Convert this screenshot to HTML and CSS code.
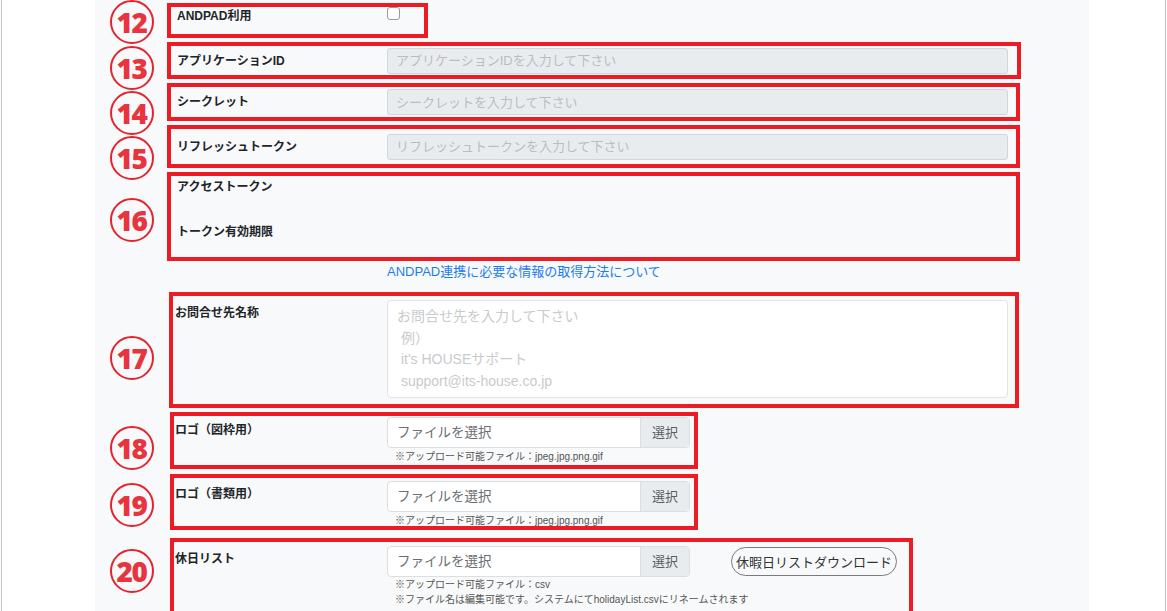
FILE: index.html
```html
<!DOCTYPE html>
<html lang="ja">
<head>
<meta charset="utf-8">
<title>ANDPAD設定</title>
<link rel="stylesheet" href="styles.css">
</head>
<body>
<div class="frame">
  <div class="panel">

    <div class="row">
      <span class="num n12">12</span>
      <div class="box b12">
        <div class="grid top">
          <label class="lbl">ANDPAD利用</label>
          <input type="checkbox" class="chk">
        </div>
      </div>
    </div>

    <div class="row r-next">
      <span class="num n13">13</span>
      <div class="box b13">
        <div class="grid mid">
          <label class="lbl">アプリケーションID</label>
          <input class="txt" type="text" disabled placeholder="アプリケーションIDを入力して下さい">
        </div>
      </div>
    </div>

    <div class="row r-next">
      <span class="num n14">14</span>
      <div class="box b14">
        <div class="grid mid">
          <label class="lbl">シークレット</label>
          <input class="txt" type="text" disabled placeholder="シークレットを入力して下さい">
        </div>
      </div>
    </div>

    <div class="row r-next">
      <span class="num n15">15</span>
      <div class="box b15">
        <div class="grid mid">
          <label class="lbl">リフレッシュトークン</label>
          <input class="txt" type="text" disabled placeholder="リフレッシュトークンを入力して下さい">
        </div>
      </div>
    </div>

    <div class="row r-next">
      <span class="num n16">16</span>
      <div class="box b16">
        <div class="stack">
          <span class="lbl">アクセストークン</span>
          <span class="lbl">トークン有効期限</span>
        </div>
      </div>
    </div>

    <div class="linkrow">
      <a class="help" href="#">ANDPAD連携に必要な情報の取得方法について</a>
    </div>

    <div class="row r17">
      <span class="num n17">17</span>
      <div class="box b17">
        <div class="grid wide">
          <label class="lbl lbl-top">お問合せ先名称</label>
          <textarea class="area" placeholder="お問合せ先を入力して下さい&#10; 例）&#10; it's HOUSEサポート&#10; support@its-house.co.jp"></textarea>
        </div>
      </div>
    </div>

    <div class="row r-next">
      <span class="num n18">18</span>
      <div class="box b18">
        <div class="grid wide">
          <label class="lbl lbl-top">ロゴ（図枠用）</label>
          <div class="field">
            <div class="file"><span class="file-name">ファイルを選択</span><span class="file-btn">選択</span></div>
            <p class="hint">※アップロード可能ファイル：jpeg.jpg.png.gif</p>
          </div>
        </div>
      </div>
    </div>

    <div class="row r19">
      <span class="num n19">19</span>
      <div class="box b19">
        <div class="grid wide">
          <label class="lbl lbl-top">ロゴ（書類用）</label>
          <div class="field">
            <div class="file"><span class="file-name">ファイルを選択</span><span class="file-btn">選択</span></div>
            <p class="hint">※アップロード可能ファイル：jpeg.jpg.png.gif</p>
          </div>
        </div>
      </div>
    </div>

    <div class="row r20">
      <span class="num n20">20</span>
      <div class="box b20">
        <div class="grid wide">
          <label class="lbl lbl-top">休日リスト</label>
          <div class="field">
            <div class="file-line">
              <div class="file"><span class="file-name">ファイルを選択</span><span class="file-btn">選択</span></div>
              <button class="dl" type="button">休暇日リストダウンロード</button>
            </div>
            <p class="hint">※アップロード可能ファイル：csv</p>
            <p class="hint">※ファイル名は編集可能です。システムにてholidayList.csvにリネームされます</p>
          </div>
        </div>
      </div>
    </div>

  </div>
</div>
</body>
</html>
```

FILE: styles.css
```css
* { box-sizing: border-box; }

html, body {
  margin: 0;
  padding: 0;
  background: #ffffff;
  overflow: hidden;
}

body {
  font-family: "Liberation Sans", "Noto Sans CJK JP", sans-serif;
  color: #212529;
}

.frame {
  margin-left: 1px;
  width: 1165px;
  height: 611px;
  border-left: 1px solid #c2c2c2;
  border-right: 1px solid #c2c2c2;
  overflow: hidden;
}

.panel {
  margin-left: 93px;
  width: 994px;
  height: 611px;
  background: #f8f9fa;
  padding-top: 3px;
}

.row {
  position: relative;
}

.r-next { margin-top: 4px; }
.r17 { margin-top: 12px; }
.r19 { margin-top: 5px; }
.r20 { margin-top: 8px; }

/* annotation number badges */
.num {
  position: absolute;
  left: 15px;
  width: 44px;
  height: 44px;
  border: 2px solid #e6222c;
  border-radius: 50%;
  color: #e8343e;
  font-family: "Open Sans", "Liberation Sans", sans-serif;
  font-weight: 800;
  font-size: 28px;
  letter-spacing: -1.5px;
  line-height: 40px;
  text-align: center;
  text-indent: -1px;
}
.n12 { top: -3px; }
.n13 { top: 4px; }
.n14 { top: 8px; }
.n15 { top: 11px; }
.n16 { top: 26px; }
.n17 { top: 44px; }
.n18 { top: 14px; }
.n19 { top: 9px; }
.n20 { top: 11px; }

/* annotation red boxes */
.box {
  border: 4px solid #ed1c24;
  margin-left: 72px;
}
.b12 { width: 261px; height: 35px; padding-left: 6px; }
.b13 { width: 854px; height: 37px; padding-left: 6px; }
.b14 { width: 853px; height: 38px; padding-left: 6px; }
.b15 { width: 853px; height: 43px; padding-left: 6px; }
.b16 { width: 853px; height: 89px; padding: 2px 0 0 6px; }
.b17 { width: 850px; height: 116px; margin-left: 74px; padding: 4px 0 0 2px; }
.b18 { width: 528px; height: 57px; margin-left: 75px; padding: 1px 0 0 1px; }
.b19 { width: 528px; height: 56px; margin-left: 75px; padding: 3px 0 0 1px; }
.b20 { width: 743px; height: 80px; margin-left: 75px; padding: 4px 0 0 1px; }

.grid {
  display: grid;
  grid-template-columns: 210px 1fr;
  height: 100%;
}
.grid.top { align-items: start; }
.grid.mid { align-items: center; }
.grid.wide { grid-template-columns: 212px 1fr; align-items: start; }

.lbl {
  font-size: 12px;
  font-weight: bold;
  line-height: 18px;
  color: #212529;
}
.lbl-top { padding-top: 4px; }

.chk {
  -webkit-appearance: none;
  appearance: none;
  margin: 0;
  width: 13px;
  height: 13px;
  border: 1px solid #9a9a9a;
  border-radius: 3px;
  background: #fff;
}

.txt {
  width: 621px;
  height: 26px;
  margin: 0;
  padding: 0 8px;
  border: 1px solid #d2d6da;
  border-radius: 3px;
  background: #e9ecef;
  font-family: inherit;
  font-size: 13px;
}
.txt::placeholder { color: #b9bdc1; }

.stack {
  display: flex;
  flex-direction: column;
  gap: 27px;
}

.linkrow {
  margin-top: 1px;
  padding-left: 292px;
  height: 18px;
  line-height: 18px;
}
.help {
  font-size: 13px;
  color: #1a7cf5;
  text-decoration: none;
}

.area {
  display: block;
  width: 621px;
  height: 98px;
  margin: 0;
  padding: 5px 9px;
  border: 1px solid #e1e4e7;
  border-radius: 4px;
  background: #fff;
  font-family: inherit;
  font-size: 14px;
  line-height: 21.5px;
  resize: none;
}
.area::placeholder { color: #c8cbce; }

.field { display: flex; flex-direction: column; }

.file {
  display: flex;
  width: 303px;
  height: 31px;
  border: 1px solid #dcdfe2;
  border-radius: 4px;
  background: #fff;
  overflow: hidden;
}
.file-name {
  flex: 1;
  padding-left: 9px;
  font-size: 13.5px;
  line-height: 29px;
  color: #6a6e72;
}
.file-btn {
  width: 49px;
  background: #e9ecef;
  border-left: 1px solid #dcdfe2;
  text-align: center;
  font-size: 13px;
  line-height: 29px;
  color: #5a5e62;
}

.hint {
  margin: 0;
  padding-left: 8px;
  font-size: 10px;
  line-height: 15px;
  color: #555;
}
.file + .hint { margin-top: 1px; }

.file-line {
  display: flex;
  align-items: center;
  gap: 41px;
}

.dl {
  height: 29px;
  padding: 0 4px;
  border: 1px solid #7a7a7a;
  border-radius: 15px;
  background: transparent;
  font-family: inherit;
  font-size: 13px;
  color: #333;
}
```
